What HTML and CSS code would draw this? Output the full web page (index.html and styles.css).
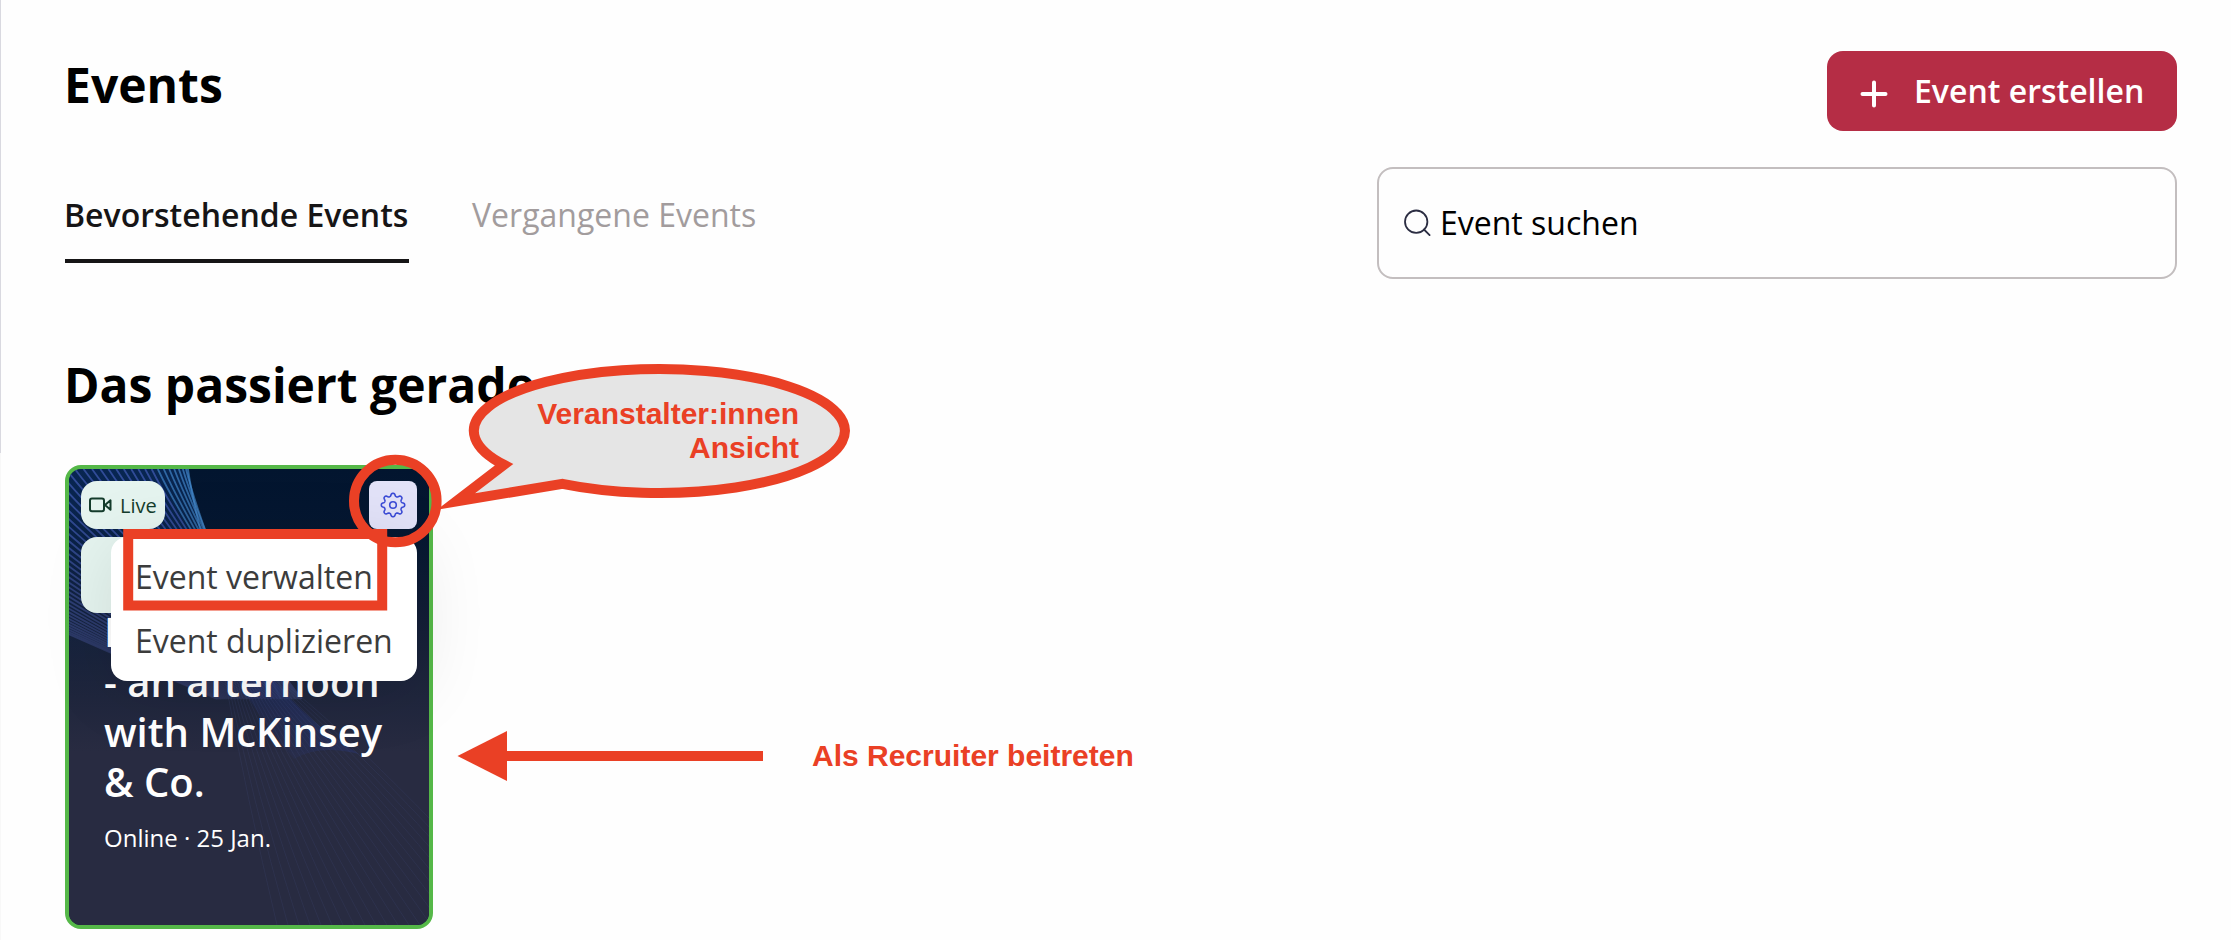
FILE: index.html
```html
<!DOCTYPE html>
<html lang="de">
<head>
    <meta charset="utf-8">
    <title>Events</title>
    <link rel="stylesheet" href="styles.css">
</head>
<body>
    <div class="page">
        <div class="header">
            <h1>Events</h1>
            <button class="create-button">
                <svg width="28" height="28" viewBox="0 0 28 28">
                    <path d="M14 2.5v23M2.5 14h23" stroke="#fff" stroke-width="4" stroke-linecap="round"/>
                </svg>
                <span>Event erstellen</span>
            </button>
        </div>

        <div class="toolbar">
            <div class="tabs">
                <a class="tab active">Bevorstehende Events</a>
                <a class="tab">Vergangene Events</a>
            </div>
            <div class="search">
                <svg width="28" height="28" viewBox="0 0 28 28" fill="none" stroke="#2b2d42" stroke-width="1.8" stroke-linecap="round">
                    <circle cx="12.2" cy="13.7" r="11.2"/>
                    <path d="M20 21.5l5.6 5.6"/>
                </svg>
                <span>Event suchen</span>
            </div>
        </div>

        <h2>Das passiert gerade</h2>

        <div class="card">
            <svg class="card-waves" width="360" height="456" viewBox="0 0 360 456" fill="none">
                <defs>
                    <linearGradient id="shade" x1="0" y1="0" x2="0" y2="1">
                        <stop offset="0" stop-color="#282b41" stop-opacity="0"/>
                        <stop offset="0.15" stop-color="#282b41" stop-opacity="0.1"/>
                        <stop offset="0.62" stop-color="#282b41" stop-opacity="1"/>
                    </linearGradient>
                    <linearGradient id="glow" x1="0" y1="0" x2="0" y2="1">
                        <stop offset="0" stop-color="#0f3a7c" stop-opacity="0.45"/>
                        <stop offset="1" stop-color="#0f3a7c" stop-opacity="0"/>
                    </linearGradient>
                    <linearGradient id="band" gradientUnits="userSpaceOnUse" x1="255" y1="240" x2="205" y2="300">
                        <stop offset="0" stop-color="#2b3f9c" stop-opacity="0.32"/>
                        <stop offset="1" stop-color="#2b3f9c" stop-opacity="0"/>
                    </linearGradient>
                </defs>
                <path d="M0 0H119Q124 40 150 100V230H0Z" fill="url(#glow)"/>
                <g id="waves"></g>
                <rect width="360" height="456" fill="url(#shade)"/>
                <path d="M165 205H200Q240 255 290 285Q250 275 225 290Q190 250 165 205Z" fill="url(#band)"/>
                <g id="rays"></g>
            </svg>
            <div class="card-top">
                <div class="badge">
                    <svg width="24" height="16" viewBox="0 0 24 16" fill="none" stroke="#143c2c" stroke-width="2" stroke-linejoin="round">
                        <rect x="2" y="1.5" width="14" height="12.8" rx="2"/>
                        <path d="M17 8l5.5-4.7v9.4z"/>
                    </svg>
                    <span>Live</span>
                </div>
                <div class="settings">
                    <svg width="26" height="26" viewBox="0 0 26 26" fill="none" stroke="#3c4cd6" stroke-width="1.6" stroke-linejoin="round">
                        <path id="gear"/>
                        <circle cx="13" cy="13" r="3.3"/>
                    </svg>
                </div>
            </div>
            <div class="badge-tall"></div>
            <div class="card-text">
                <div class="card-title">Inside Tech<br>- an afternoon<br>with McKinsey<br>&amp; Co.</div>
                <div class="card-info">Online · 25 Jan.</div>
            </div>
            <div class="menu">
                <a>Event verwalten</a>
                <a>Event duplizieren</a>
            </div>
        </div>
    </div>

    <!-- hints drawn over the page -->
    <svg class="marks" width="2231" height="940" viewBox="0 0 2231 940" fill="none" stroke="#ea4025" stroke-width="10">
        <path d="M504 464.8A185.5 62 0 1 1 562.5 483.8L456 501.5Z" fill="#e5e5e5" stroke-miterlimit="10"/>
        <circle cx="395.3" cy="501" r="41.3"/>
        <rect x="128.2" y="534" width="254" height="71.5"/>
        <path d="M506 756H763"/>
        <path d="M457.5 756L507 731V781Z" fill="#ea4025" stroke="none"/>
    </svg>
    <div class="hint hint-view">Veranstalter:innen<br>Ansicht</div>
    <div class="hint hint-join">Als Recruiter beitreten</div>

    <script>
        // fan of lines in the top left corner, steep and bright on the right side
        let waves = '';
        for (let i = 0; i < 50; i++) {
            let u = i / 49;
            let x = 119 - 460 * Math.pow(u, 1.4);
            let a = (8 + 50 * Math.pow(u, 0.55)) * Math.PI / 180;
            let b = a + 0.15;
            let mx = x + 60 * Math.tan(a);
            let color = u < 0.15 ? '#4a94dc' : '#4c66c8';
            waves += '<path d="M' + x.toFixed(1) + ' 0Q' + mx.toFixed(1) + ' 60 ' + (mx + 170 * Math.tan(b)).toFixed(1) + ' 230" stroke="' + color + '" stroke-opacity="0.6" stroke-width="1.8"/>';
        }
        document.getElementById('waves').innerHTML = waves;

        let rays = '';
        for (let i = 0; i < 24; i++) {
            rays += '<path d="M' + (155 + i * 2.1) + ' 205Q' + (178 + i * 5) + ' ' + (330 - i * 2.5) + ' ' + (208 + i * 11) + ' 456" stroke="#4a5590" stroke-opacity="0.16"/>';
        }
        document.getElementById('rays').innerHTML = rays;

        // gear outline with eight teeth
        let d = '';
        for (let i = 0; i <= 160; i++) {
            let a = i / 160 * Math.PI * 2;
            let r = 10.3 + 1.5 * Math.tanh(1.6 * Math.cos(8 * a));
            d += (i ? 'L' : 'M') + (13 + r * Math.sin(a)).toFixed(2) + ' ' + (13 - r * Math.cos(a)).toFixed(2);
        }
        document.getElementById('gear').setAttribute('d', d + 'Z');
    </script>
</body>
</html>
```
FILE: styles.css
```css
* {
    box-sizing: border-box;
}

body {
    margin: 0;
    height: 940px;
    overflow: hidden;
    position: relative;
    background-color: #fefefe;
    font-family: "Open Sans", "Noto Sans", sans-serif;
    color: #000;
}

.page {
    height: 940px;
    padding: 51px 54px 0 64px;
    border-left: 1px solid;
    border-image: linear-gradient(#d9d9e0 453px, #f8f8f8 453px) 1;
}

.header {
    display: flex;
    justify-content: space-between;
    align-items: flex-start;
    height: 116px;
}

h1, h2 {
    margin: 0;
    font-size: 48px;
    font-weight: 700;
    line-height: 68px;
    text-indent: -1px;
}

.create-button {
    display: flex;
    align-items: center;
    gap: 26px;
    width: 350px;
    height: 80px;
    padding: 0 0 0 33px;
    border: none;
    border-radius: 16px;
    background-color: #b52d45;
    color: #fff;
    font-family: inherit;
    font-size: 32px;
    font-weight: 600;
    white-space: nowrap;
}

.create-button svg {
    margin-top: 6px;
}

.create-button span {
    margin-top: -2px;
}

.toolbar {
    display: flex;
    justify-content: space-between;
    height: 112px;
}

.tabs {
    display: flex;
    align-items: flex-start;
    gap: 63px;
    padding-top: 24px;
}

.tab {
    height: 72px;
    line-height: 48px;
    font-size: 32px;
    color: #a29c9d;
}

.tab.active {
    color: #161516;
    font-weight: 600;
    text-indent: -1px;
    width: 344px;
    border-bottom: 4px solid #161516;
    white-space: nowrap;
}

.search {
    display: flex;
    align-items: center;
    gap: 8px;
    width: 800px;
    padding: 0 0 2px 25px;
    border: 2px solid #c3bebf;
    border-radius: 16px;
    font-size: 32px;
}

h2 {
    margin-top: 72px;
    margin-bottom: 46px;
}

.card {
    position: relative;
    width: 368px;
    height: 464px;
    padding: 12px;
    border: 4px solid #55b848;
    border-radius: 16px;
    background-color: #02152f;
}

.card-waves {
    position: absolute;
    left: 0;
    top: 0;
    border-radius: 12px;
}

.card-top {
    position: relative;
    display: flex;
    justify-content: space-between;
}

.badge {
    display: flex;
    align-items: center;
    gap: 8px;
    width: 84px;
    height: 48px;
    padding-left: 7px;
    border-radius: 16px;
    background-color: #e5f4ef;
    color: #143c2c;
    font-size: 20px;
}

.badge-tall {
    position: relative;
    width: 84px;
    height: 76px;
    margin-top: 8px;
    border-radius: 16px;
    background-color: #e5f4ef;
}

.settings {
    display: flex;
    align-items: center;
    justify-content: center;
    width: 48px;
    height: 48px;
    border-radius: 8px;
    background-color: #e2e2f8;
}

.card-text {
    position: relative;
    padding-left: 23px;
    color: #fff;
    white-space: nowrap;
}

.card-title {
    margin-top: -6px;
    font-size: 40px;
    font-weight: 600;
    line-height: 50px;
}

.card-info {
    margin-top: 13px;
    font-size: 24px;
    line-height: 36px;
}

.menu {
    position: absolute;
    left: 42px;
    top: 68px;
    width: 306px;
    height: 144px;
    padding: 8px 0 0 24px;
    border-radius: 16px;
    background-color: #fff;
    box-shadow: 0 8px 72px rgba(0, 0, 0, 0.1);
    color: #3c3c3c;
    font-size: 32px;
    line-height: 64px;
}

.menu a {
    display: block;
}

.marks {
    position: absolute;
    left: 0;
    top: 0;
}

.hint {
    position: absolute;
    font-family: "Liberation Sans", Arial, sans-serif;
    font-size: 30px;
    font-weight: 700;
    line-height: 34px;
    color: #ea4025;
    white-space: nowrap;
}

.hint-view {
    right: 1432px;
    top: 397px;
    text-align: right;
}

.hint-join {
    left: 812px;
    top: 739px;
}
```
